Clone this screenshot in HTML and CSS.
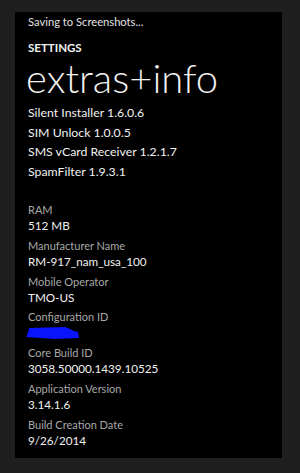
FILE: index.html
```html
<!DOCTYPE html>
<html lang="en">
<head>
    <meta charset="UTF-8">
    <meta name="viewport" content="width=device-width, initial-scale=1.0">
    <title>extras+info</title>
    <link rel="stylesheet" href="styles.css">
</head>
<body>

    <div class="phone">
        <!-- status toast -->
        <div class="toast">Saving to Screenshots...</div>

        <div class="app-title">SETTINGS</div>
        <div class="page-title">extras+info</div>

        <!-- installed extras -->
        <div class="extras">
            <div class="extra">Silent Installer 1.6.0.6</div>
            <div class="extra">SIM Unlock 1.0.0.5</div>
            <div class="extra">SMS vCard Receiver 1.2.1.7</div>
            <div class="extra">SpamFilter 1.9.3.1</div>
        </div>

        <!-- device info -->
        <div class="info">
            <div class="label">RAM</div>
            <div class="value">512 MB</div>
            <div class="label">Manufacturer Name</div>
            <div class="value">RM-917_nam_usa_100</div>
            <div class="label">Mobile Operator</div>
            <div class="value">TMO-US</div>
            <div class="label">Configuration ID</div>
            <div class="value scribble">
                <svg width="56" height="15" viewBox="0 0 56 15">
                    <path d="M4 3 L40 2 L45 4 L49 6 L53 7 L54 13 L30 14 L1 12 L3 8 Z" fill="#0a14ff"/>
                </svg>
            </div>
            <div class="label">Core Build ID</div>
            <div class="value">3058.50000.1439.10525</div>
            <div class="label">Application Version</div>
            <div class="value">3.14.1.6</div>
            <div class="label">Build Creation Date</div>
            <div class="value">9/26/2014</div>
        </div>
    </div>

</body>
</html>
```

FILE: styles.css
```css
/* page */
body {
    margin: 0;
    padding: 0;
    background: #1f1f1f;
    font-family: Lato, "Open Sans", sans-serif;
    color: #f2f2f2;
}

.phone {
    margin: 12px 18px 15px 15px;
    height: 446px;
    box-sizing: border-box;
    background: #000000;
    padding: 2px 0 0 13px;
    overflow: hidden;
}

.toast {
    font-size: 11.2px;
    line-height: 15px;
    color: #e0e0e0;
}

.app-title {
    margin-top: 11px;
    font-size: 11.5px;
    line-height: 15px;
    font-weight: 700;
}

.page-title {
    margin-top: 2px;
    margin-left: -2px;
    font-size: 40px;
    font-weight: 300;
    line-height: 42px;
}

.extras {
    margin-top: 4px;
}

.extra {
    font-size: 12.3px;
    line-height: 19.5px;
}

.info {
    margin-top: 21px;
}

.label {
    font-size: 11px;
    line-height: 16px;
    color: #a8a8a8;
}

.value {
    font-size: 11.7px;
    line-height: 15px;
    margin-bottom: 4.75px;
}

.scribble {
    height: 15px;
    margin-left: -3px;
}
```
